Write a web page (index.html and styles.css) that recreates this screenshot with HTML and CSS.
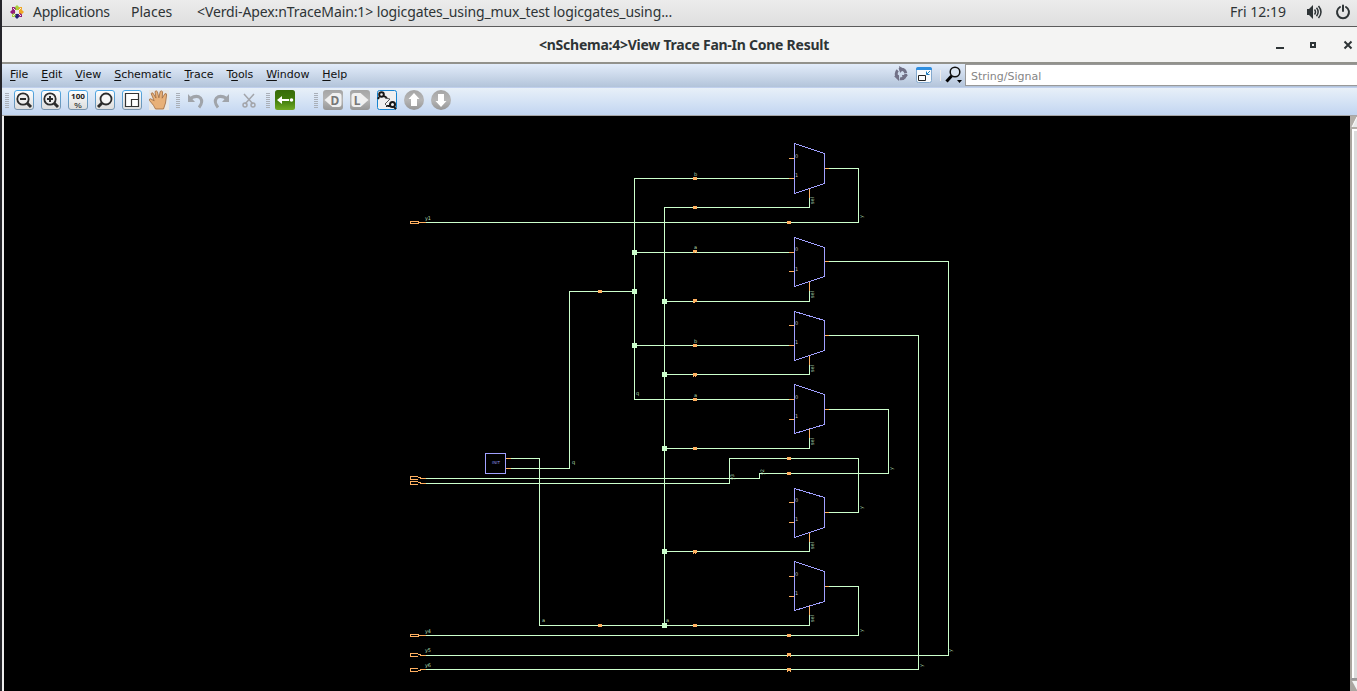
FILE: index.html
```
<!DOCTYPE html>
<html lang="en">
<head>
<meta charset="utf-8">
<title>nSchema</title>
<link rel="stylesheet" href="styles.css">
</head>
<body>
<div class="desktop">
  <header class="panel">
    <svg class="distro" width="14" height="14" viewBox="0 0 14 14">
      <path fill="#a7cf3c" d="M7 0l2 2v3.500L7 6 5 5V2z"/><path fill="#efa724" d="M14 7l-2 2H9L8 7l1-2h3z"/><path fill="#262577" d="M7 14l-2-2V9l2-1 2 1v3z"/><path fill="#951c7a" d="M0 7l2-2h3l1 2-1 2H2z"/>
      <path fill="#efa724" d="M9.500 2H12v2.500L10 6 8 4z"/><path fill="#951c7a" d="M2 2h2.500L6 4 4 6 2 4.500z"/><path fill="#a7cf3c" d="M2 9.500L4 8l2 2-1.500 2H2z"/><path fill="#951c7a" d="M12 9.500V12H9.500L8 10l2-2z"/><circle cx="7" cy="7" r="2" fill="#eee"/><path stroke="#eee" stroke-width="1" d="M3 3l8 8M11 3l-8 8"/>
    </svg>
    <span class="apps">Applications</span>
    <span class="places">Places</span>
    <span class="task">&lt;Verdi-Apex:nTraceMain:1&gt; logicgates_using_mux_test logicgates_using...</span>
    <span class="clock">Fri 12:19</span>
    <svg class="sound" width="16" height="16" viewBox="0 0 16 16"><path fill="#2e3436" d="M1 5h2l4-4v14l-4-4H1z"/><path fill="none" stroke="#2e3436" stroke-width="1.500" d="M8.500 5.500q2 2.500 0 5M10.500 3.800q3.300 4.200 0 8.400M12.500 2q5 6 0 12"/></svg>
    <svg class="power" width="16" height="16" viewBox="0 0 16 16"><path fill="none" stroke="#2e3436" stroke-width="2" stroke-linecap="round" d="M5 3a6 6 0 1 0 6 0M8 1.500v5.500"/></svg>
  </header>
  <div class="titlebar">
    <span class="title">&lt;nSchema:4&gt;View Trace Fan-In Cone Result</span>
    <svg class="winbtns" width="78" height="12" viewBox="0 0 78 12"><path fill="#2e3436" d="M1 8h8v2H1z"/><path fill="none" stroke="#2e3436" stroke-width="2" d="M36 4h4v4h-4z"/><path stroke="#2e3436" stroke-width="2" d="M69.500 2.500l7 7M76.500 2.500l-7 7"/></svg>
  </div>
  <div class="menubar">
    <nav class="menus">
      <span><u>F</u>ile</span><span><u>E</u>dit</span><span><u>V</u>iew</span><span><u>S</u>chematic</span><span><u>T</u>race</span><span>T<u>o</u>ols</span><span><u>W</u>indow</span><span><u>H</u>elp</span>
    </nav>
    <svg class="quick" width="72" height="20" viewBox="893 65 72 20">
      <circle cx="901" cy="74" r="4.800" fill="none" stroke="#717187" stroke-width="3" stroke-dasharray="8.500 1.550"/><path fill="#717187" d="M899 66l5 3-4 4zM908 75l-5 5-1-5zM894 76l5-1v6z"/>
      <rect x="916.500" y="67.500" width="15" height="15" rx="2" fill="#f8fafc" stroke="#83a9ce"/><path fill="#2e8ee0" d="M916 69q0-2 2-2h12q2 0 2 2v1h-16z"/><path fill="none" stroke="#222" d="M918.500 75.500h7v5h-7z"/><path fill="none" stroke="#1d7bbd" d="M930 71l-3 3m-.5-2.500v3h3"/>
      <path stroke="#eee" d="M940.500 70v11"/><circle cx="955" cy="72" r="4.800" fill="#dce6f2" stroke="#111" stroke-width="1.500"/><path stroke="#000" stroke-width="3" d="M951.500 76l-5 5.500"/><path d="M957 80h5l-2.500 3z"/>
    </svg>
    <div class="search">String/Signal</div>
  </div>
  <div class="toolbar">
    <svg width="460" height="27" viewBox="2 88 460 27">
      <defs>
        <linearGradient id="btn" x2="0" y2="1"><stop stop-color="#fff"/><stop offset="1" stop-color="#dcdcdc"/></linearGradient>
        <linearGradient id="edge" x2="0" y2="1"><stop stop-color="#4aa6e6"/><stop offset="1" stop-color="#7893ad"/></linearGradient>
        <linearGradient id="gray" x2="0" y2="1"><stop stop-color="#a5a5a5"/><stop offset=".5" stop-color="#b5b5b5"/><stop offset="1" stop-color="#969696"/></linearGradient>
        <linearGradient id="green" x2="0" y2="1"><stop stop-color="#376b0b"/><stop offset=".5" stop-color="#3f7b0c"/><stop offset="1" stop-color="#71aa25"/></linearGradient>
        <g id="frame"><rect x=".5" y=".5" width="19" height="19" rx="2.500" fill="url(#btn)" stroke="url(#edge)"/></g>
        <g id="grip" stroke="#a9afb8"><path d="M0 .5h4M0 2.500h4M0 4.500h4M0 6.500h4M0 8.500h4M0 10.500h4M0 12.500h4M0 14.500h4"/></g>
        <g id="lens"><circle cx="9" cy="9" r="5.700" fill="#eee" stroke="#2c2c2c" stroke-width="1.800"/><path stroke="#2c2c2c" stroke-width="3" d="M13 13l4 4"/></g>
      </defs>
      <use href="#grip" x="5" y="93"/><use href="#grip" x="176" y="93"/><use href="#grip" x="266" y="93"/><use href="#grip" x="314" y="93"/>
      <use href="#frame" x="14" y="90"/><use href="#lens" x="14" y="90"/><path stroke="#2c2c2c" stroke-width="2" d="M20 99h6"/>
      <use href="#frame" x="41" y="90"/><use href="#lens" x="41" y="90"/><path stroke="#2c2c2c" stroke-width="2" d="M47 99h6M50 96v6"/>
      <use href="#frame" x="68" y="90"/><text class="pct-top" x="78" y="99" textLength="14" lengthAdjust="spacingAndGlyphs">100</text><text class="pct" x="78" y="108" textLength="8" lengthAdjust="spacingAndGlyphs">%</text>
      <use href="#frame" x="95" y="90"/><circle cx="106" cy="99" r="5.500" fill="#f8f8f8" stroke="#2c2c2c" stroke-width="1.800"/><path stroke="#2c2c2c" stroke-width="3" d="M102 103l-4 4"/>
      <use href="#frame" x="122" y="90"/><path fill="#fff" stroke="#333" stroke-width="1.200" d="M125.500 93.500h13v13h-13zM131.500 99.500h7v7h-7z"/>
      <path fill="#e8e7e6" d="M149 90h20v20h-20z"/><path fill="#e8b078" stroke="#9d683e" stroke-width=".8" stroke-linejoin="round" d="M155.500 109q-1-3-6-8.500-.5-2 1.200-1.700l3.500 2-3-7q.3-1.600 1.800-.7l3 5-1-6.500q1.200-1.600 2.400.1l1.500 6.100 1.300-6.300q1.300-1.300 2.400.2l-.4 6.500 2.700-4.500q1.900-.5 1.700 1.300L165.500 103l-2 6z"/>
      <path fill="none" stroke="#a0a4aa" stroke-width="3" d="M190 98.500q7-4 10.500-.5 3 4-1.500 9.500M227 98.500q-7-4-10.500-.5-3 4 1.500 9.500"/><path fill="#a0a4aa" d="M188 94v8h7zM229 94v8h-7z"/>
      <g fill="none" stroke="#a3a5aa" stroke-width="1.500"><path d="M244 94l9 10M254 94l-9 10"/><circle cx="245" cy="105" r="2"/><circle cx="253" cy="105" r="2"/></g>
      <rect x="275" y="90" width="20" height="20" rx="2.500" fill="url(#green)"/><path fill="#fff" d="M277 100l5-4v3h7v2h-7v3z"/><circle cx="291.500" cy="100" r="1.800" fill="#fff"/>
      <rect x="323" y="90" width="20" height="20" rx="3" fill="url(#gray)"/><path fill="#f0f0f0" d="M324.500 100l8-7h6q3 0 3 3v8q0 3-3 3h-6z"/><text class="letter" x="335" y="104.500">D</text>
      <rect x="350" y="90" width="20" height="20" rx="3" fill="url(#gray)"/><path fill="#f0f0f0" d="M368.500 100l-8-7h-6q-3 0-3 3v8q0 3 3 3h6z"/><text class="letter" x="357" y="104.500">L</text>
      <rect x="377.500" y="90.500" width="19" height="19" rx="2" fill="#f0f0f0" stroke="#1684d1"/><g fill="none" stroke="#171717" stroke-width="2"><circle cx="381.500" cy="94.500" r="2.300"/><circle cx="392.500" cy="104.500" r="2.500"/><path d="M379 97l-1 2M384 96l3 2M390 106l-4 0M394 107l2 2"/></g><path fill="none" stroke="#555" d="M385 98l5 1-5 5 3 3"/>
      <circle cx="414" cy="100" r="10" fill="url(#gray)"/><path fill="#fff" d="M414 93l5.500 6H417v7h-6v-7h-2.500z"/>
      <circle cx="441" cy="100" r="10" fill="url(#gray)"/><path fill="#fff" d="M441 107l5.500-6H444v-7h-6v7h-2.500z"/>
    </svg>
  </div>
  <main class="workspace">
    <svg class="schematic" width="1346" height="575" viewBox="4 116 1346 575">
      <defs>
        <g id="node"><rect x="-2" y="-2" width="5" height="5"/></g>
        <g id="tap"><rect x="-2" y="-1" width="4" height="3"/></g>
      </defs>
      <g class="wire">
        <path d="M789 178.500H634.500V399.500H789M809.500 198V207.500H664.500V625.500M425 222.500H858.500V168.500H829"/>
        <path d="M634 252.500H789M829 261.500H948.500V655.500H425M809.500 291V301.500H664M506 468.500H569.500V291.500H634"/>
        <path d="M634 345.500H789M829 335.500H918.500V669.500H425M809.500 365V374.500H664"/>
        <path d="M829 409.500H888.500V473.500H759.500V478.500H425M809.500 438V448.500H664"/>
        <path d="M829 512.500H858.500V458.500H729.500V483.500H425M809.500 542V551.500H664"/>
        <path d="M829 586.500H858.500V635.500H425M511 458.500H539.500V625.500H809.500V615"/>
      </g>
      <g class="gate">
        <path d="M794.500 143.500L824.500 153.500V183.500L794.500 193.500z"/><path d="M794.500 237.500L824.500 247.500V276.500L794.500 286.500z"/><path d="M794.500 311.500L824.500 320.500V350.500L794.500 360.500z"/><path d="M794.500 384.500L824.500 394.500V424.500L794.500 433.500z"/><path d="M794.500 488.500L824.500 497.500V527.500L794.500 537.500z"/><path d="M794.500 561.500L824.500 571.500V601.500L794.500 610.500z"/>
        <path d="M485.500 453.500H505.500V473.500H485.500z"/>
      </g>
      <g class="pin">
        <path d="M789 158.500h5M789 178.500h5M825 168.500h4M809.500 189v9M789 252.500h5M789 271.500h5M825 261.500h4M809.500 282v9"/>
        <path d="M789 325.500h5M789 345.500h5M825 335.500h4M809.500 356v9M789 399.500h5M789 419.500h5M825 409.500h4M809.500 429v9"/>
        <path d="M789 502.500h5M789 522.500h5M825 512.500h4M809.500 533v9M789 576.500h5M789 596.500h5M825 586.500h4M809.500 606v9M506 458.500h5M506 468.500h5"/>
        <path d="M410.500 221.500H418.500V223.500H410.500zM419 222.500H426M419 635.500H426M418.500 634.500H410.500V636.500H418.500z"/>
        <path d="M418 476.500H410.500V479.500H418M418 477.500h2v1h6M418 481.500H410.500V484.500H418M418 482.500h2v1h6M418 653.500H410.500V656.500H418M418 654.500h2v1h6M418 671.500H410.500V668.500H418M418 670.500h2v-1h6"/>
      </g>
      <g class="nodes"><use href="#node" x="634" y="252"/><use href="#node" x="634" y="291"/><use href="#node" x="634" y="345"/><use href="#node" x="664" y="301"/><use href="#node" x="664" y="374"/><use href="#node" x="664" y="448"/><use href="#node" x="664" y="551"/><use href="#node" x="664" y="625"/></g>
      <g class="taps"><use href="#tap" x="695" y="178"/><use href="#tap" x="695" y="207"/><path d="M693 250h4v3h-1v-1h-1v1h-2zM693 299h4v3h-2v1h-2z"/><use href="#tap" x="695" y="345"/><path d="M693 373h4v3h-1v1h-1v-1h-1v1h-1z"/><use href="#tap" x="695" y="399"/><use href="#tap" x="695" y="448"/><path d="M693 550h4v3h-1v1h-1v-1h-1v1h-1z"/><use href="#tap" x="695" y="625"/><use href="#tap" x="600" y="291"/><use href="#tap" x="600" y="625"/><use href="#tap" x="789" y="222"/><use href="#tap" x="789" y="458"/><use href="#tap" x="789" y="473"/><use href="#tap" x="789" y="635"/><path d="M787 653h4v4h-1v-1h-2v1h-1zM787 668h4v4h-1v-1h-2v1h-1z"/></g>
      <g class="net">
        <text x="694" y="176">b</text><text x="694" y="249">a</text><text x="694" y="343">b</text><text x="694" y="397">a</text>
        <text x="636" y="395">q</text><text x="572" y="464">q</text><text x="542" y="622">a</text><text x="666" y="622">a</text>
        <text x="425" y="220" textLength="6">y1</text><text x="425" y="633" textLength="6">y4</text><text x="425" y="652" textLength="6">y5</text><text x="425" y="667" textLength="6">y6</text>
        <text transform="translate(814 204) rotate(-90)" textLength="7">sel</text><text transform="translate(814 298) rotate(-90)" textLength="7">sel</text><text transform="translate(814 372) rotate(-90)" textLength="7">sel</text><text transform="translate(814 445) rotate(-90)" textLength="7">sel</text><text transform="translate(814 549) rotate(-90)" textLength="7">sel</text><text transform="translate(814 622) rotate(-90)" textLength="7">sel</text>
        <text transform="translate(863 218) rotate(-90)">y</text><text transform="translate(863 509) rotate(-90)">y</text><text transform="translate(893 470) rotate(-90)">y</text><text transform="translate(863 632) rotate(-90)">y</text><text transform="translate(952 652) rotate(-90)">y</text><text transform="translate(923 667) rotate(-90)">y</text>
        <text transform="translate(734 480) rotate(-90)" textLength="6">y3</text><text transform="translate(764 475) rotate(-90)" textLength="6">y2</text>
      </g>
      <g class="index">
        <text x="795" y="158">0</text><text x="795" y="177">1</text><text x="795" y="251">0</text><text x="795" y="271">1</text><text x="795" y="325">0</text><text x="795" y="344">1</text><text x="795" y="399">0</text><text x="795" y="418">1</text><text x="795" y="502">0</text><text x="795" y="521">1</text><text x="795" y="576">0</text><text x="795" y="595">1</text>
      </g>
      <text class="init" x="492" y="464" textLength="8">INIT</text>
    </svg>
    <div class="scroll">
      <svg width="7" height="13" viewBox="0 0 7 13"><path fill="#b2aea8" d="M0 0h7v13H0z"/><path fill="#e8e8e8" d="M2 11L7 1v10z"/><path stroke="#fff" d="M2 11L7 1"/></svg>
      <div class="thumb"></div>
      <svg width="7" height="11" viewBox="0 0 7 11"><path fill="#aaa6a0" d="M0 0h7v11H0z"/><path fill="#f4f4f4" d="M2 1h5v9z"/></svg>
    </div>
  </main>
</div>
</body>
</html>
```
FILE: styles.css
```
* { box-sizing: border-box; }
body { margin: 0; overflow: hidden; background: #1c1c20; }
.desktop { width: 1357px; height: 691px; padding-left: 2px; display: flex; flex-direction: column; background: #25252a; }
.panel { height: 27px; flex: none; display: flex; align-items: center; padding: 0 6px 2px 8px; background: linear-gradient(#ececec, #dfdfdf); border-bottom: 1px solid #5b5b5b; font: 14px/24px "Noto Sans", sans-serif; color: #2e3436; white-space: nowrap; }
.distro { margin-right: 9px; }
.apps { width: 98px; letter-spacing: -.32px; }
.places { width: 66px; letter-spacing: 0; }
.task { letter-spacing: -.11px; }
.clock { margin-left: auto; letter-spacing: 0; }
.sound { margin: 0 13px 0 20px; }
.titlebar { height: 37px; flex: none; display: grid; grid-template-columns: 1fr auto; align-items: center; padding: 1px 4px 0 0; background: #f4f4f3; border-bottom: 2px solid #92928c; font: bold 14px/30px "Noto Sans", sans-serif; color: #2e3436; }
.title { padding-left: 537px; letter-spacing: -.25px; white-space: nowrap; }
.menubar { height: 24px; flex: none; display: flex; background: linear-gradient(#e2ecfa, #b3c4da); border-bottom: 1px solid #c0d0ed; font: 11px/20px "DejaVu Sans", sans-serif; color: #101010; }
.menus { display: flex; gap: 13px; padding: 1px 0 0 8px; flex: 1; letter-spacing: -.05px; }
.menus u { text-underline-offset: 2px; text-decoration-thickness: 1px; }
.quick { margin-top: 1px; flex: none; }
.search { width: 392px; height: 22px; background: #fff; border: 1px solid #999; border-right: 0; color: #858585; padding: 2px 0 0 5px; line-height: 19px; }
.toolbar { height: 28px; flex: none; background: linear-gradient(#e8f0f8, #d5e3f5 50%, #c2d5f1); border-bottom: 1px solid #a6a6a6; }
.toolbar svg { display: block; }
.pct-top { font: bold 7px "Noto Sans", sans-serif; fill: #222; text-anchor: middle; }
.pct { font: 7px "Noto Sans", sans-serif; fill: #222; text-anchor: middle; }
.letter { font: bold 12px "Noto Sans", sans-serif; fill: #777; text-anchor: middle; }
.workspace { flex: 1; min-height: 0; display: flex; background: #eee; padding-left: 2px; }
.schematic { flex: none; background: #000; shape-rendering: crispEdges; }
.wire { fill: none; stroke: #cfc; }
.gate { fill: none; stroke: #a0a0ff; }
.pin { fill: none; stroke: #ffb060; }
.nodes { fill: #cfc; }
.taps { fill: #ffb060; }
.net { font: 5px "DejaVu Sans", sans-serif; fill: #b5dfb5; }
.index { font: 5px "DejaVu Sans", sans-serif; fill: #bbb; }
.init { font: 4px "DejaVu Sans", sans-serif; fill: #9292e5; }
.scroll { width: 7px; display: flex; flex-direction: column; }
.thumb { flex: 1; background: #dcdcdc; border-left: 2px solid #aaa69f; border-bottom: 2px solid #999; box-shadow: inset 2px 2px #fff; }
```
